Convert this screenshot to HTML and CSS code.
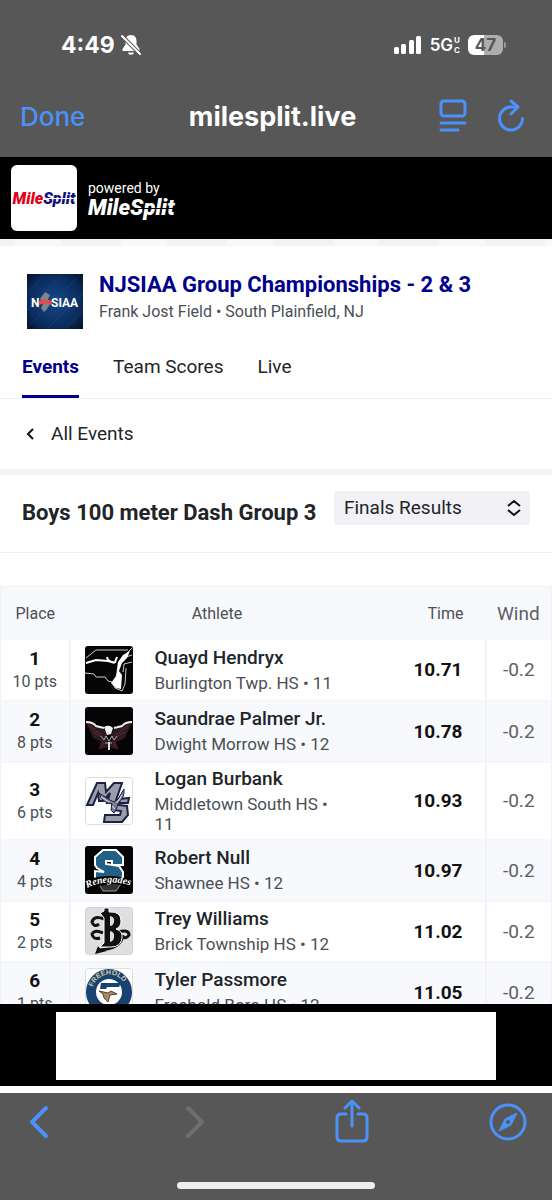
FILE: index.html
```html
<!DOCTYPE html>
<html lang="en">

<head>
	<meta charset="UTF-8">
	<meta name="viewport" content="width=device-width, initial-scale=1.0">
	<title>milesplit.live</title>
	<link rel="stylesheet" href="styles.css">
</head>

<body>
	<header class="browser-top">
		<div class="status">
			<div class="status-left">
				<span class="clock">4:49</span>
				<svg width="20" height="22" viewBox="0 0 20 22">
					<path fill="#fff" d="M10 1C6 1 4.500 4 4.500 7v3.500L1.500 15c-.5 1 0 2 1 2h15c1 0 1.500-1 1-2l-3-4.500V7c0-3-1.500-6-5.500-6zM7 18.500c.6 3 5.400 3 6 0z" />
					<path stroke="#575757" stroke-width="4" d="M0 1l20 20" />
					<path stroke="#fff" stroke-width="2" stroke-linecap="round" d="M1 2l18 18" />
				</svg>
			</div>
			<div class="status-right">
				<svg width="28" height="18" viewBox="0 0 28 18" fill="#fff">
					<rect x="0" y="11" width="5" height="7" rx="1.500" />
					<rect x="7" y="8" width="5" height="10" rx="1.500" />
					<rect x="15" y="4" width="5" height="14" rx="1.500" />
					<rect x="22" y="0" width="5" height="18" rx="1.500" />
				</svg>
				<span class="network">5G<span class="network-uc"><i>U</i><i>C</i></span></span>
				<span class="battery">47</span>
			</div>
		</div>
		<div class="address">
			<button class="done">Done</button>
			<span class="domain">milesplit.live</span>
			<div class="address-icons">
				<button aria-label="Reader">
					<svg width="28" height="34" viewBox="0 0 28 34" fill="none" stroke="#4a91f9" stroke-width="3" stroke-linecap="round">
						<rect x="2" y="2" width="24" height="15" rx="3" />
						<path d="M2 24h24M2 31h17" />
					</svg>
				</button>
				<button aria-label="Reload">
					<svg width="28" height="34" viewBox="0 0 28 34" fill="none" stroke="#4a91f9" stroke-width="3" stroke-linecap="round" stroke-linejoin="round">
						<path d="M25.500 19.500A11.500 11.500 0 1 1 14 8h6" />
						<path d="M14 2l7 6-7 7" />
					</svg>
				</button>
			</div>
		</div>
	</header>

	<div class="brand">
		<a href="#" class="brand-tile"><span class="red">Mile</span><span class="navy slit">Split</span></a>
		<div class="brand-text">
			<small>powered by</small>
			<a href="#" class="wordmark">Mile<span class="slit">Split</span></a>
		</div>
	</div>
	<div class="strip"></div>

	<main class="page">
		<section class="meet">
			<svg class="meet-logo" width="56" height="55" viewBox="0 0 56 55">
				<defs>
					<radialGradient id="navy" r=".75">
						<stop offset="0" stop-color="#154783" />
						<stop offset=".6" stop-color="#0b2d60" />
						<stop offset="1" stop-color="#020b1c" />
					</radialGradient>
				</defs>
				<rect width="56" height="55" fill="url(#navy)" />
				<path stroke="#2a5c9c" stroke-width="1" opacity=".3" d="M0 18L18 0M0 36L36 0M0 54L54 0M20 55l36-36M38 55l18-18" />
				<path fill="#7c8590" d="M18 18l5 3-2 4 2 5-3 5-3 3-3-4 2-4-3-5z" />
				<text x="4" y="33" class="logo-nj">N</text>
				<text x="24" y="33" class="logo-nj">SIAA</text>
				<path fill="#e5484d" d="M12 27q6-3 13 0v4q-7-3-13 0z" />
			</svg>
			<div>
				<h1>NJSIAA Group Championships - 2 &amp; 3</h1>
				<p>Frank Jost Field • South Plainfield, NJ</p>
			</div>
		</section>

		<nav class="tabs">
			<a href="#" class="active">Events</a>
			<a href="#">Team Scores</a>
			<a href="#">Live</a>
		</nav>

		<a href="#" class="back">
			<svg width="9" height="12" viewBox="0 0 9 12" fill="none" stroke="#111" stroke-width="2">
				<path d="M7 1L2 6l5 5" />
			</svg>
			All Events
		</a>

		<section class="event">
			<h2>Boys 100 meter Dash Group 3</h2>
			<div class="round">
				<select aria-label="Round">
					<option>Finals Results</option>
				</select>
				<svg width="14" height="16" viewBox="0 0 14 16" fill="none" stroke="#111" stroke-width="2" stroke-linejoin="round">
					<path d="M1 6l6-5 6 5M1 10l6 5 6-5" />
				</svg>
			</div>
		</section>

		<table class="results">
			<thead>
				<tr>
					<th class="place">Place</th>
					<th colspan="2" class="athlete-head">Athlete</th>
					<th class="time">Time</th>
					<th class="wind">Wind</th>
				</tr>
			</thead>
			<tbody>
				<tr>
					<td class="place"><b>1</b>10 pts</td>
					<td class="logo">
						<svg viewBox="0 0 48 48">
							<rect width="48" height="48" rx="3" fill="#050505" />
							<path fill="none" stroke="#ccc" d="M1 12L11 4h32M47 2l-8 8M47 9l-9 3M47 16l-8 2-1 8M0 27l9 1 2 3h9l3 4 4 1 3 6 7 3 3-7 1-16" />
							<path fill="none" stroke="#fff" stroke-width="2" d="M1 17l10-3 12 1 7 2M22 11q1 6 8 5l2-5" />
							<path fill="#fff" d="M45 5l-3 7-5 5-3 8 3 4-1 14-5-1-5-5 5-7 2-14 5-7z" />
						</svg>
					</td>
					<td class="athlete"><a href="#">Quayd Hendryx</a>Burlington Twp. HS • 11</td>
					<td class="time">10.71</td>
					<td class="wind">-0.2</td>
				</tr>
				<tr>
					<td class="place"><b>2</b>8 pts</td>
					<td class="logo">
						<svg viewBox="0 0 48 48">
							<rect width="48" height="48" rx="3" fill="#050505" />
							<path fill="#241f21" stroke="#4c1620" d="M2 16l15 5 5 7-3 7-10-4zM46 16l-15 5-5 7 3 7 10-4zM17 34l-3 8 10-3 9 3-3-8z" />
							<path stroke="#7a2030" d="M5 19l12 9M8 25l9 5M43 19l-12 9M40 25l-9 5M19 35l-3 5M28 35l3 5" />
							<path fill="none" stroke="#eee" stroke-width="2" d="M1 15q7 0 10 4l8 2M47 15q-7 0-10 4l-8 2" />
							<path fill="#f3f3f3" d="M19 20q5-3 9 1l-2 6-4 1z" />
							<path fill="none" stroke="#aaa" d="M16 29l3 4 2-4 3 5 3-5 2 4 3-4M20 36h7" />
							<path stroke="#ddd" stroke-width="2" d="M24 35v8" />
						</svg>
					</td>
					<td class="athlete"><a href="#">Saundrae Palmer Jr.</a>Dwight Morrow HS • 12</td>
					<td class="time">10.78</td>
					<td class="wind">-0.2</td>
				</tr>
				<tr>
					<td class="place"><b>3</b>6 pts</td>
					<td class="logo">
						<svg viewBox="0 0 48 48">
							<rect x=".5" y=".5" width="47" height="47" rx="3" fill="#fff" stroke="#ddd" />
							<path fill="#9a9ea8" stroke="#1b2148" stroke-width="2" d="M2 28L12 6h8l1 9 8-9h8l-7 20h-8l3-10-7 8h-4l-1-8-5 12z" />
							<path fill="#9a9ea8" stroke="#1b2148" stroke-width="2" d="M44 21l-10 1-7 6 1 5 8 1-1 4H20l-1 7h18l6-7-1-9-8-1 1-2h8z" />
							<path fill="#7d828e" stroke="#1b2148" d="M14 16q3 10 13 11l-1 6 3 3 3-6 1-4q7-5 6-14l-6 10-4 3-4-2z" />
							<path fill="none" stroke="#dfe1e6" d="M16 20l8 5M37 18l-5 8M27 29l3 3" />
						</svg>
					</td>
					<td class="athlete"><a href="#">Logan Burbank</a>Middletown South HS • 11</td>
					<td class="time">10.93</td>
					<td class="wind">-0.2</td>
				</tr>
				<tr>
					<td class="place"><b>4</b>4 pts</td>
					<td class="logo">
						<svg viewBox="0 0 48 48">
							<rect width="48" height="48" rx="3" fill="#050505" />
							<path fill="#216184" stroke="#fff" stroke-width="2" d="M18 4h13l7 7v8H27v-4h-6v3l13 2 4 6v7H10v-8l9 1-7-4-2-3v-8z" />
							<path fill="#333" stroke="#999" d="M14 38h22l-5 7H18z" />
							<path fill="#050505" d="M1 34q24-8 46 0v7q-22-6-46 3z" />
							<path fill="none" id="arc" d="M2 42Q22 32 47 40" />
							<text class="logo-script"><textPath href="#arc">Renegades</textPath></text>
						</svg>
					</td>
					<td class="athlete"><a href="#">Robert Null</a>Shawnee HS • 12</td>
					<td class="time">10.97</td>
					<td class="wind">-0.2</td>
				</tr>
				<tr>
					<td class="place"><b>5</b>2 pts</td>
					<td class="logo">
						<svg viewBox="0 0 48 48">
							<rect x=".5" y=".5" width="47" height="47" rx="3" fill="#dedfe1" stroke="#d2d2d4" />
							<path fill="none" stroke="#111" stroke-width="3" d="M19 12q-10-4-12 3 2 6 7 2M18 26q-8-4-11 1 1 6 8 4M33 25q11-3 11 3-3 5-8 1M38 28q-2 14-24 15" />
							<path fill="#111" stroke="#fff" d="M15 6l4-2V1h5v4q12-1 12 9 0 6-5 8 7 2 6 9-1 9-11 9H15l4-4V11z" />
							<path fill="#dedfe1" d="M25 9q5 1 4 6-1 4-4 4zM25 24q5 1 4 6 0 4-4 5z" />
							<path fill="#111" d="M10 47l3-8 3 4 6 1z" />
						</svg>
					</td>
					<td class="athlete"><a href="#">Trey Williams</a>Brick Township HS • 12</td>
					<td class="time">11.02</td>
					<td class="wind">-0.2</td>
				</tr>
				<tr>
					<td class="place"><b>6</b>1 pts</td>
					<td class="logo">
						<svg viewBox="0 0 48 48">
							<rect x=".5" y=".5" width="47" height="47" rx="3" fill="#fff" stroke="#ddd" />
							<circle cx="24" cy="24" r="18" fill="#fff" stroke="#174371" stroke-width="10" />
							<path fill="none" id="ring" d="M8 19A17 17 0 0 1 41 20" />
							<text class="logo-ring"><textPath href="#ring">FREEHOLD</textPath></text>
							<path fill="#174371" d="M16 15h20l-2 4H22l-1 2h-6z" />
							<path fill="#a98a60" stroke="#53422f" d="M14 23l9 2 3-2 6 3-7 1-2 7-4-4-1-4z" />
						</svg>
					</td>
					<td class="athlete"><a href="#">Tyler Passmore</a>Freehold Boro HS • 12</td>
					<td class="time">11.05</td>
					<td class="wind">-0.2</td>
				</tr>
			</tbody>
		</table>
	</main>

	<aside class="ad">
		<div class="ad-slot"></div>
	</aside>

	<footer class="browser-bottom">
		<div class="toolbar">
			<button aria-label="Back">
				<svg width="20" height="44" viewBox="0 0 20 44" fill="none" stroke="#4a91f9" stroke-width="4" stroke-linecap="round" stroke-linejoin="round">
					<path d="M17 8L3 22l14 14" />
				</svg>
			</button>
			<button aria-label="Forward" disabled>
				<svg width="20" height="44" viewBox="0 0 20 44" fill="none" stroke="#6e6e6e" stroke-width="4" stroke-linecap="round" stroke-linejoin="round">
					<path d="M3 8l14 14L3 36" />
				</svg>
			</button>
			<button aria-label="Share">
				<svg width="34" height="44" viewBox="0 0 34 44" fill="none" stroke="#4a91f9" stroke-width="3" stroke-linecap="round" stroke-linejoin="round">
					<path d="M11 14H6q-4 0-4 4v19q0 4 4 4h22q4 0 4-4V18q0-4-4-4h-5M17 26V2M10 8l7-7 7 7" />
				</svg>
			</button>
			<button aria-label="Open in browser">
				<svg width="38" height="44" viewBox="0 0 38 44">
					<circle cx="19" cy="22" r="17" fill="none" stroke="#4a91f9" stroke-width="3" />
					<path fill="#4a91f9" stroke="#4a91f9" stroke-linejoin="round" d="M28 13l-6 12-12 6 6-12z" />
					<circle cx="19" cy="22" r="2" fill="#575757" />
				</svg>
			</button>
		</div>
		<div class="home-bar"></div>
	</footer>
</body>

</html>
```
FILE: styles.css
```css
* {
	box-sizing: border-box;
}

body {
	display: flex;
	flex-direction: column;
	height: 100vh;
	margin: 0;
	background: #fff;
	color: #212529;
	font-family: Roboto, "Liberation Sans", sans-serif;
	font-size: 19px;
}

h1,
h2,
p {
	margin: 0;
}

a {
	color: inherit;
	text-decoration: none;
}

button {
	padding: 0;
	border: 0;
	background: none;
	font: inherit;
}

svg {
	display: block;
}

.browser-top,
.browser-bottom {
	flex: none;
	background: #575757;
	color: #fff;
	font-family: Inter, "Liberation Sans", sans-serif;
}

.browser-top {
	height: 157px;
	padding-top: 30px;
}

.status {
	display: flex;
	justify-content: space-between;
	height: 30px;
	padding: 0 49px 0 61px;
}

.status-left,
.status-right {
	display: flex;
	align-items: center;
}

.status-left {
	gap: 6px;
}

.status-right {
	gap: 8px;
}

.clock {
	font-size: 23px;
	font-weight: 700;
}

.network {
	display: flex;
	align-items: center;
	gap: 1px;
	font-size: 17px;
	font-weight: 600;
}

.network-uc {
	display: flex;
	flex-direction: column;
	font-size: 8px;
	font-weight: 700;
	line-height: 10px;
}

.network-uc i {
	font-style: normal;
}

.battery {
	position: relative;
	width: 35px;
	height: 20px;
	border-radius: 6px;
	background: linear-gradient(90deg, #fff 47%, #adadad 47%);
	color: #575757;
	font-size: 17px;
	font-weight: 700;
	line-height: 20px;
	text-align: center;
}

.battery::after {
	content: "";
	position: absolute;
	top: 7px;
	right: -3px;
	width: 2px;
	height: 6px;
	border-radius: 0 2px 2px 0;
	background: #999;
}

.address {
	display: grid;
	grid-template-columns: 1fr auto 1fr;
	align-items: center;
	height: 80px;
	padding: 0 27px 0 20px;
	margin-top: 16px;
	font-size: 26px;
}

.done {
	justify-self: start;
	color: #4a91f9;
	font-weight: 500;
}

.domain {
	font-size: 27px;
	font-weight: 700;
}

.address-icons {
	display: flex;
	justify-content: flex-end;
	gap: 30px;
}

.brand {
	display: flex;
	flex: none;
	align-items: center;
	gap: 11px;
	height: 82px;
	padding: 0 11px;
	background: #000;
	color: #fff;
}

.brand-tile {
	display: flex;
	align-items: center;
	justify-content: center;
	width: 66px;
	height: 66px;
	border-radius: 6px;
	background: #fff;
	font: italic 900 16px Roboto, sans-serif;
}

.red {
	color: #e2001a;
}

.navy {
	color: #14107c;
}

.brand-text {
	padding-top: 4px;
}

.brand-text small {
	display: block;
	font-size: 14px;
	line-height: 16px;
}

.wordmark {
	display: block;
	font: italic 900 22px/24px Roboto, sans-serif;
}

/* thin cut through the second half of the wordmark */
.slit {
	position: relative;
}

.slit::after {
	content: "";
	position: absolute;
	top: 52%;
	left: 0;
	width: 100%;
	height: 1px;
	background: #000;
}

.navy::after {
	background: #fff;
}

.strip {
	flex: none;
	height: 7px;
	background: repeating-linear-gradient(90deg, #f3f3f3 0 15px, #f8f8f8 15px 61px, #f3f3f3 61px 106px);
}

.page {
	flex: 1;
	min-height: 0;
	overflow: hidden;
}

.meet {
	display: flex;
	gap: 16px;
	height: 84px;
	padding: 28px 27px 0;
}

.meet-logo {
	flex: none;
}

.logo-nj {
	fill: #fff;
	font: 700 12px Roboto, sans-serif;
}

.meet h1 {
	color: #00008b;
	font-size: 22px;
	line-height: 22px;
}

.meet p {
	color: #4b4f54;
	font-size: 16px;
	line-height: 32px;
}

.tabs {
	display: flex;
	gap: 34px;
	height: 69px;
	padding: 0 22px;
	border-bottom: 1px solid #eee;
	line-height: 74px;
}

.tabs a {
	height: 68px;
}

.tabs .active {
	border-bottom: 3px solid #00008b;
	color: #00008b;
	font-weight: 700;
}

.back {
	display: flex;
	align-items: center;
	gap: 16px;
	height: 76px;
	padding: 0 26px;
	border-bottom: 6px solid #f4f4f5;
	line-height: 70px;
}

.event {
	display: flex;
	align-items: center;
	justify-content: space-between;
	height: 78px;
	padding: 0 22px 2px;
	border-bottom: 1px solid #eee;
}

.event h2 {
	font-size: 22px;
}

.round {
	position: relative;
	width: 196px;
	height: 34px;
	margin-bottom: 10px;
}

.round select {
	width: 100%;
	height: 100%;
	padding: 0 10px;
	border: 0;
	border-radius: 3px;
	appearance: none;
	background: #f1f1f6;
	color: #212529;
	font: inherit;
}

.round svg {
	position: absolute;
	top: 9px;
	right: 9px;
	pointer-events: none;
}

.results {
	width: 100%;
	margin-top: 33px;
	border: 1px solid #f1f1f4;
	border-collapse: collapse;
}

.results th {
	height: 53px;
	padding: 0;
	background: #f8f9fd;
	color: #4b4f54;
	font-size: 16px;
	font-weight: 400;
}

.results td {
	padding: 0;
	border-bottom: 2px solid #f5f6f9;
}

.results tbody tr {
	height: 61px;
}

.results tbody tr:nth-child(even) {
	background: #f8f9fd;
}

.results .place {
	width: 69px;
	color: #4b4f54;
	font-size: 16px;
	line-height: 23px;
	text-align: center;
}

.results td.place {
	border-right: 2px solid #f3f3f7;
}

.place b {
	display: block;
	color: #111;
	font-size: 19px;
	font-weight: 700;
}

.logo {
	width: 85px;
}

.logo svg {
	width: 48px;
	height: 48px;
	margin-left: 14px;
}

.results .athlete-head {
	padding-left: 30px;
}

.results .athlete {
	width: 180px;
	padding: 1px 0 5px;
	color: #4b4f54;
	font-size: 17px;
	line-height: 20px;
}

.athlete a {
	display: block;
	color: #212529;
	font-size: 19px;
	font-weight: 500;
	line-height: 30px;
}

.results .time {
	padding-right: 22px;
	text-align: right;
}

.results td.time {
	color: #111;
	font-weight: 700;
}

.results .wind {
	width: 66px;
	color: #5c6065;
	font-size: 19px;
	text-align: center;
}

.results td.wind {
	border-left: 2px solid #f3f3f7;
}

.logo-script {
	fill: #fff;
	font: italic 700 10px "Liberation Serif", serif;
}

.logo-ring {
	fill: #d9c9a3;
	font: 700 7px "Liberation Sans", sans-serif;
}

.ad {
	flex: none;
	height: 82px;
	padding: 8px 56px 6px;
	background: #000;
}

.ad-slot {
	height: 68px;
	background: #fff;
}

.browser-bottom {
	height: 107px;
	margin-top: 7px;
	padding-top: 7px;
}

.toolbar {
	display: flex;
	justify-content: space-between;
	padding: 0 25px 0 20px;
}

.toolbar button {
	display: flex;
	justify-content: center;
	width: 38px;
}

.home-bar {
	width: 36%;
	height: 7px;
	margin: 38px auto 0;
	border-radius: 4px;
	background: #eee;
}
```
